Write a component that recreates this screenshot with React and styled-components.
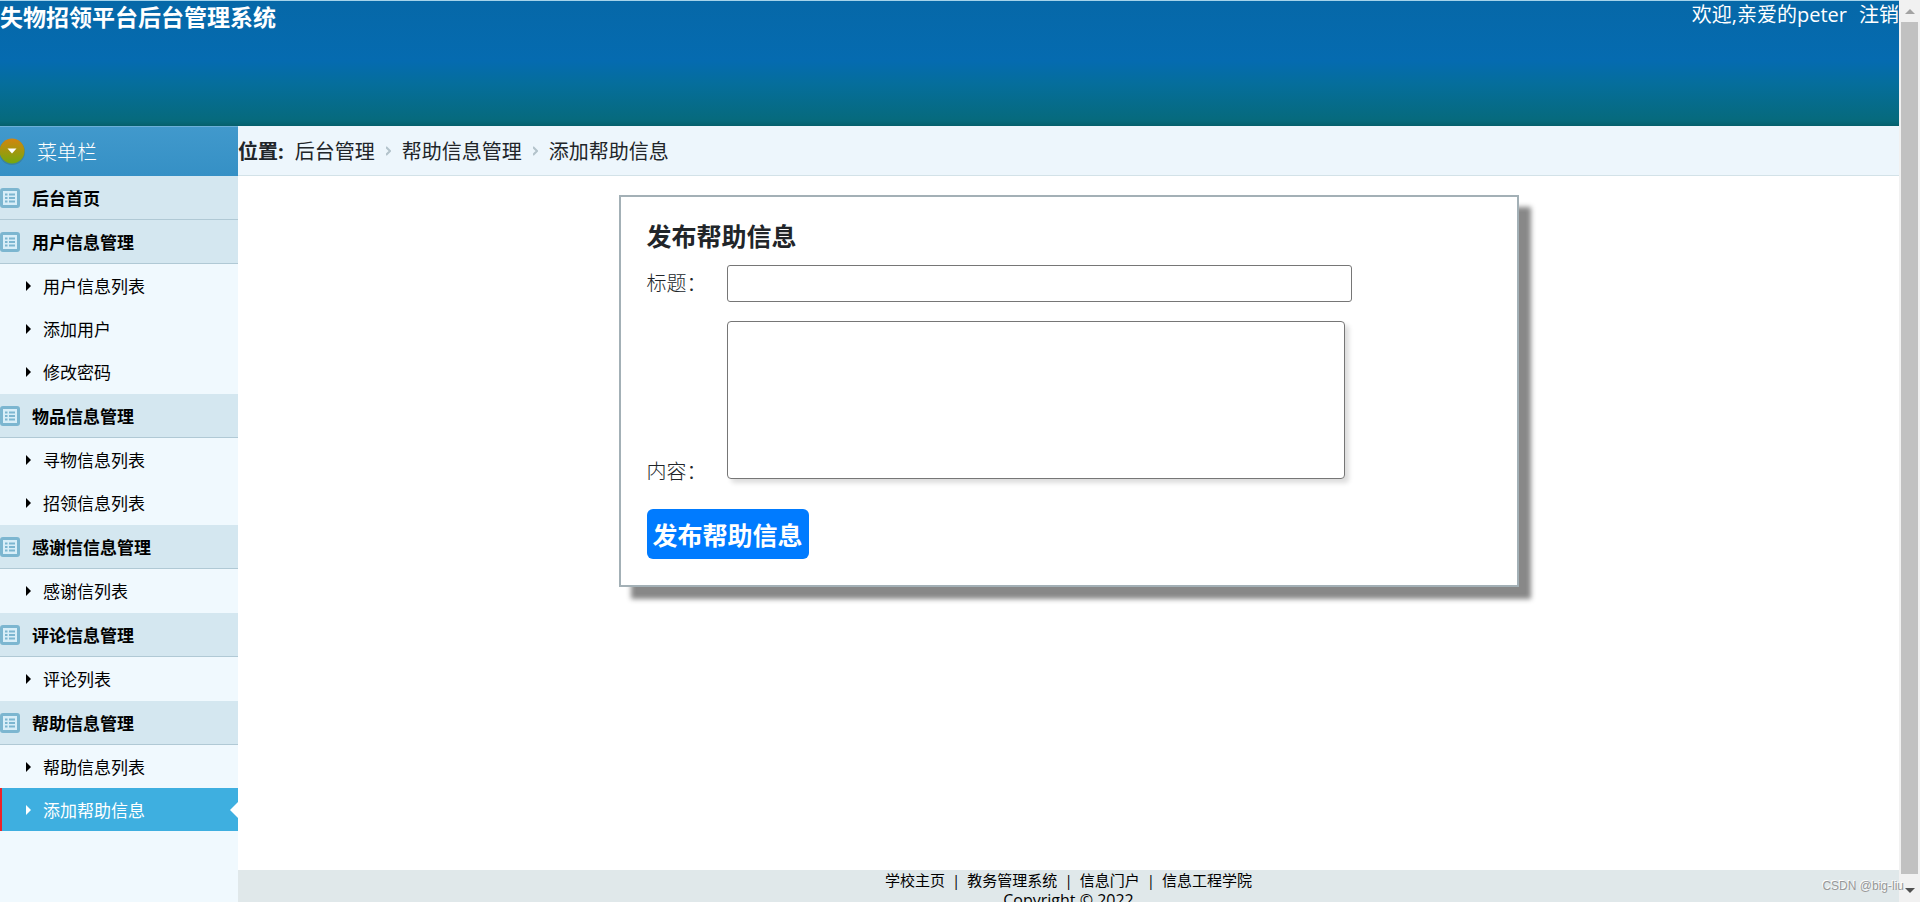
import React from 'react'
import styled, { createGlobalStyle } from 'styled-components'

const menu = [
  { title: '后台首页', items: [] },
  { title: '用户信息管理', items: ['用户信息列表', '添加用户', '修改密码'] },
  { title: '物品信息管理', items: ['寻物信息列表', '招领信息列表'] },
  { title: '感谢信信息管理', items: ['感谢信列表'] },
  { title: '评论信息管理', items: ['评论列表'] },
  { title: '帮助信息管理', items: ['帮助信息列表', '添加帮助信息'] },
]

const crumbs = ['后台管理', '帮助信息管理', '添加帮助信息']
const footerLinks = ['学校主页', '教务管理系统', '信息门户', '信息工程学院']
const current = '添加帮助信息'

function ListIcon() {
  return (
    <svg width="20" height="20" viewBox="0 0 20 20">
      <rect x="1.500" y="1.500" width="17" height="17" rx="1.500" fill="#d8eef8" stroke="#7cb6d0" strokeWidth="3" />
      <path d="M5 6.500h2.500M5 10h2.500M5 13.500h2.500M9 6.500h6M9 10h6M9 13.500h6" stroke="#7cb6d0" strokeWidth="2" />
    </svg>
  )
}

function TitleIcon() {
  return (
    <svg width="25" height="28" viewBox="0 0 25 28">
      <defs>
        <linearGradient id="ball" x1="0" y1="0" x2="0" y2="1">
          <stop offset="0" stopColor="#d3850f" />
          <stop offset="1" stopColor="#74a80e" />
        </linearGradient>
      </defs>
      <circle cx="12" cy="14" r="13" fill="#3b83a0" />
      <circle cx="12" cy="13" r="12.500" fill="url(#ball)" />
      <path d="M7.500 10.500h9l-4.500 5z" fill="#fff" />
    </svg>
  )
}

function Arrow() {
  return (
    <svg width="5" height="10" viewBox="0 0 5 10">
      <path d="M0 0l5 5-5 5z" fill="currentColor" />
    </svg>
  )
}

function App() {
  return (
    <Window>
      <GlobalStyle />
      <Page>
        <Header>
          <h1>失物招领平台后台管理系统</h1>
          <User>
            <span>欢迎,亲爱的peter</span>
            <a href="#logout">注销</a>
          </User>
        </Header>
        <Body>
          <Sidebar>
            <MenuTitle>
              <TitleIcon />
              菜单栏
            </MenuTitle>
            {menu.map((group) => (
              <React.Fragment key={group.title}>
                <GroupTitle href="#group">
                  <ListIcon />
                  {group.title}
                </GroupTitle>
                {group.items.length > 0 && (
                  <GroupList>
                    {group.items.map((item) => (
                      <li key={item}>
                        <MenuLink href="#item" $active={item === current}>
                          <Arrow />
                          {item}
                        </MenuLink>
                      </li>
                    ))}
                  </GroupList>
                )}
              </React.Fragment>
            ))}
          </Sidebar>
          <Main>
            <Place>
              <b>位置:</b>
              {crumbs.map((crumb, i) => (
                <React.Fragment key={crumb}>
                  {i > 0 && (
                    <svg width="5" height="10" viewBox="0 0 5 10">
                      <path d="M0 1l4 4-4 4" fill="none" stroke="#b3c3cb" strokeWidth="2" />
                    </svg>
                  )}
                  <a href="#place">{crumb}</a>
                </React.Fragment>
              ))}
            </Place>
            <Form>
              <h2>发布帮助信息</h2>
              <Field>
                <label htmlFor="title">标题：</label>
                <TextInput id="title" type="text" />
              </Field>
              <Field $bottom>
                <label htmlFor="content">内容：</label>
                <TextArea id="content" />
              </Field>
              <SubmitButton type="button">发布帮助信息</SubmitButton>
            </Form>
            <Footer>
              <nav>
                {footerLinks.map((link, i) => (
                  <React.Fragment key={link}>
                    {i > 0 && <span>|</span>}
                    <a href="#link">{link}</a>
                  </React.Fragment>
                ))}
              </nav>
              <p>Copyright © 2022</p>
            </Footer>
          </Main>
        </Body>
      </Page>
      <ScrollTrack>
        <svg width="10" height="5" viewBox="0 0 10 5">
          <path d="M0 5l5-5 5 5z" fill="#a3a3a3" />
        </svg>
        <ScrollThumb />
        <svg width="10" height="5" viewBox="0 0 10 5">
          <path d="M0 0l5 5 5-5z" fill="#505050" />
        </svg>
      </ScrollTrack>
      <Watermark>CSDN @big-liu</Watermark>
    </Window>
  )
}

export default App


const GlobalStyle = createGlobalStyle`
* {
    box-sizing: border-box;
}

body {
    margin: 0;
    font-family: "Open Sans", "Noto Sans CJK SC", sans-serif;
    color: #212529;
    background: #fff;
}

h1, h2, p, ul {
    margin: 0;
    padding: 0;
}

a {
    color: inherit;
    text-decoration: none;
}

svg {
    display: block;
    flex-shrink: 0;
}
`

const Window = styled.div`
position: relative;
display: flex;
height: 100vh;
overflow: hidden;
`

const Page = styled.div`
flex: 1;
min-width: 0;
display: flex;
flex-direction: column;
`

const Header = styled.header`
display: flex;
justify-content: space-between;
align-items: flex-start;
flex-shrink: 0;
height: 126px;
border-top: 1px solid #a5d3ea;
color: #fff;
background: linear-gradient(#0668a8, #056bb0 48%, #056e9c 66%, #066a7c 96%, #05606c);

h1 {
    font-size: 23px;
    line-height: 32px;
    font-weight: 700;
}
`

const User = styled.div`
display: flex;
gap: 12px;
font-size: 20px;
line-height: 28px;
`

const Body = styled.div`
flex: 1;
min-height: 0;
display: flex;
`

const Sidebar = styled.aside`
width: 238px;
flex-shrink: 0;
background: #f0f9fe;
color: #000;
`

const MenuTitle = styled.div`
display: flex;
align-items: center;
gap: 12px;
height: 50px;
border-top: 1px solid #6bb0d8;
background: linear-gradient(#4199cc, #3590c5);
color: #fff;
font-size: 20px;
font-weight: 300;
`

const GroupTitle = styled.a`
display: flex;
align-items: center;
gap: 12px;
height: 44px;
border-bottom: 1px solid #b0c9d5;
background: #d4e7f0;
font-size: 17px;
font-weight: 700;
`

const GroupList = styled.ul`
list-style: none;
padding-bottom: 1px;
`

const MenuLink = styled.a`
display: flex;
align-items: center;
gap: 12px;
height: 43px;
padding-left: 24px;
border-left: 2px solid ${(p) => (p.$active ? '#ee2229' : 'transparent')};
background: ${(p) => (p.$active ? '#3eafe0' : 'none')};
color: ${(p) => (p.$active ? '#fff' : '#000')};
font-size: 17px;

&::after {
    content: "";
    display: ${(p) => (p.$active ? 'block' : 'none')};
    margin-left: auto;
    border: 8px solid transparent;
    border-left: 0;
    border-right-color: #fff;
}
`

const Main = styled.main`
flex: 1;
min-width: 0;
display: flex;
flex-direction: column;
`

const Place = styled.nav`
display: flex;
align-items: center;
gap: 11px;
flex-shrink: 0;
height: 50px;
border-bottom: 1px solid #d3e2e8;
background: #edf6fc;
font-size: 20px;
`

const Form = styled.form`
width: 900px;
max-width: 94%;
margin: 19px auto auto;
padding: 24px 26px 26px;
border: 2px solid #a3b0b6;
box-shadow: 12px 12px 5px #888;
background: #fff;

h2 {
    margin-bottom: 14px;
    font-size: 25px;
    line-height: 30px;
    font-weight: 700;
}
`

const Field = styled.div`
display: flex;
align-items: ${(p) => (p.$bottom ? 'flex-end' : 'center')};
margin-bottom: ${(p) => (p.$bottom ? '30px' : '19px')};

label {
    width: 80px;
    flex-shrink: 0;
    font-size: 20px;
    line-height: 14px;
    font-weight: 300;
}
`

const TextInput = styled.input`
width: 100%;
max-width: 625px;
height: 37px;
padding: 0 8px;
border: 1px solid #767676;
border-radius: 3px;
font: inherit;
`

const TextArea = styled.textarea`
width: 100%;
max-width: 618px;
height: 158px;
padding: 8px;
border: 1px solid #767676;
border-radius: 4px;
box-shadow: 4px 4px 5px #ddd;
font: inherit;
resize: none;
`

const SubmitButton = styled.button`
display: block;
height: 50px;
padding: 0 6px;
border: none;
border-radius: 6px;
background: #007bff;
color: #fff;
font-family: inherit;
font-size: 25px;
font-weight: 700;
cursor: pointer;
`

const Footer = styled.footer`
height: 32px;
flex-shrink: 0;
background: #e0e8ea;
color: #000;
font-size: 15px;
line-height: 20px;
text-align: center;

nav {
    display: flex;
    justify-content: center;
    gap: 7px;
}

p {
    font-size: 16px;
}
`

const ScrollTrack = styled.div`
display: flex;
flex-direction: column;
align-items: center;
gap: 8px;
width: 21px;
padding: 9px 0;
background: #f1f1f1;
`

const ScrollThumb = styled.div`
flex: 1;
width: 17px;
margin-bottom: 6px;
background: #c1c1c1;
`

const Watermark = styled.span`
position: absolute;
right: 16px;
bottom: 8px;
color: #999;
font-family: "Liberation Sans", sans-serif;
font-size: 12px;
line-height: 16px;
text-shadow: -1px -1px 0 #fff;
`
